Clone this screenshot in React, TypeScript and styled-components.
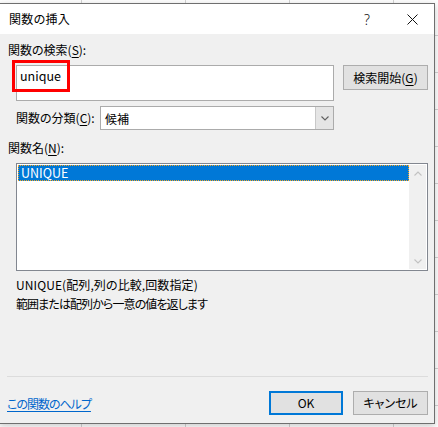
import React from "react";
import styled, { createGlobalStyle } from "styled-components";

const Global = createGlobalStyle`
  html, body { margin: 0; padding: 0; }
  body {
    width: 438px;
    height: 427px;
    overflow: hidden;
    background-color: #ffffff;
    background-image:
      linear-gradient(to right, transparent 81px, #d4d4d4 81px, #d4d4d4 82px, transparent 82px),
      linear-gradient(to bottom, transparent 35px, #d4d4d4 35px, #d4d4d4 36px, transparent 36px);
    background-size: 104px 100%, 100% 37px;
    background-position: 0 0, 0 0;
    font-family: "Noto Sans CJK JP", "Noto Sans", sans-serif;
    font-size: 12px;
    color: #000;
  }
`;

const Page = styled.div`
  padding-top: 3px;
`;

const Dialog = styled.div`
  margin-left: -1px;
  width: 434px;
  height: 419px;
  border: 1px solid #6f6f6f;
  background: #f0f0f0;
  box-shadow: 0 2px 7px rgba(0, 0, 0, 0.22);
  display: flex;
  flex-direction: column;
  font-feature-settings: "palt";
`;

const TitleBar = styled.div`
  height: 30px;
  background: #ffffff;
  display: flex;
  align-items: center;
`;

const Title = styled.div`
  flex: 1;
  padding-left: 9px;
  font-size: 12px;
  line-height: 16px;
  letter-spacing: 0.3px;
`;

const CaptionButton = styled.div<{ $w: number }>`
  width: ${(p) => p.$w}px;
  height: 30px;
  display: flex;
  align-items: center;
  justify-content: center;
  font-family: "Noto Sans", sans-serif;
  font-size: 14px;
  font-weight: 300;
  color: #111;
`;

const Body = styled.div`
  flex: 1;
  display: flex;
  flex-direction: column;
  padding-top: 8px;
`;

const Label = styled.div<{ $indent: number; $top: number }>`
  margin-left: ${(p) => p.$indent}px;
  margin-top: ${(p) => p.$top}px;
  line-height: 16px;
  height: 16px;
  white-space: nowrap;
`;

const Key = styled.span`
  text-decoration: underline;
  text-underline-offset: 2px;
`;

const SearchRow = styled.div`
  margin-top: 7px;
  margin-left: 16px;
  display: flex;
  align-items: flex-start;
  gap: 9px;
`;

const TextBox = styled.div`
  position: relative;
  box-sizing: border-box;
  width: 318px;
  height: 36px;
  background: #fff;
  border: 1px solid #ababab;
  padding: 2px 0 0 3px;
  line-height: 16px;
  font-family: "Noto Sans CJK JP", sans-serif;
  font-size: 12.5px;
`;

const Highlight = styled.div`
  position: absolute;
  left: -5px;
  top: -6px;
  width: 58px;
  height: 32px;
  box-sizing: border-box;
  border: 3px solid #ff0000;
`;

const Button = styled.div<{ $w: number; $h: number; $primary?: boolean }>`
  box-sizing: border-box;
  width: ${(p) => p.$w}px;
  height: ${(p) => p.$h}px;
  background: #e1e1e1;
  border: ${(p) => (p.$primary ? "2px solid #0078d7" : "1px solid #adadad")};
  display: flex;
  align-items: center;
  justify-content: center;
  line-height: 16px;
  white-space: nowrap;
`;

const CategoryRow = styled.div`
  margin-top: 5px;
  margin-left: 16px;
  display: flex;
  align-items: center;
  height: 24px;
`;

const CategoryLabel = styled.div`
  width: 84px;
  line-height: 16px;
  white-space: nowrap;
`;

const Select = styled.div`
  box-sizing: border-box;
  width: 234px;
  height: 24px;
  background: #fff;
  border: 1px solid #ababab;
  display: flex;
  align-items: stretch;
`;

const SelectValue = styled.div`
  flex: 1;
  padding-left: 4px;
  display: flex;
  align-items: center;
`;

const SelectArrow = styled.div`
  width: 17px;
  background: #e5e5e5;
  border-left: 1px solid #c8c8c8;
  display: flex;
  align-items: center;
  justify-content: center;
`;

const ListBox = styled.div`
  margin-top: 7px;
  margin-left: 16px;
  box-sizing: border-box;
  width: 412px;
  height: 108px;
  background: #fff;
  border: 1px solid #828790;
  padding: 1px;
  display: flex;
`;

const ListItems = styled.div`
  flex: 1;
`;

const ListItem = styled.div<{ $selected?: boolean }>`
  box-sizing: border-box;
  height: 16px;
  line-height: 14px;
  padding-left: 2px;
  background: ${(p) => (p.$selected ? "#0078d7" : "transparent")};
  color: ${(p) => (p.$selected ? "#fff" : "#000")};
  border: 1px dotted ${(p) => (p.$selected ? "#f5a623" : "transparent")};
  font-size: 12.5px;
`;

const ScrollBar = styled.div`
  width: 17px;
  background: #f0f0f0;
  display: flex;
  flex-direction: column;
  justify-content: space-between;
  align-items: center;
  padding: 6px 0 5px;
`;

const Description = styled.div`
  margin-top: 4px;
  margin-left: 16px;
`;

const DescLine = styled.div<{ $tight?: boolean }>`
  line-height: 19px;
  white-space: nowrap;
  letter-spacing: ${(p) => (p.$tight ? "-0.9px" : "0.1px")};
`;

const Separator = styled.div`
  margin: 63px 6px 0 7px;
  height: 1px;
  background: #dcdcdc;
`;

const Footer = styled.div`
  margin-top: 14px;
  padding: 0 6px 0 7px;
  display: flex;
  align-items: center;
  gap: 10px;
`;

const HelpLinkBox = styled.div`
  flex: 1;
`;

const HelpLink = styled.a`
  color: #0066cc;
  text-decoration: underline;
  text-underline-offset: 2px;
  line-height: 16px;
  letter-spacing: -1px;
  cursor: pointer;
`;

const Chevron = ({ up, color, w = 8 }: { up?: boolean; color: string; w?: number }) => (
  <svg width={w} height={5} viewBox="0 0 8 5">
    <path
      d={up ? "M0.5 4.5 L4 1 L7.5 4.5" : "M0.5 0.5 L4 4 L7.5 0.5"}
      fill="none"
      stroke={color}
      strokeWidth={1.1}
    />
  </svg>
);

export default function App() {
  return (
    <>
      <Global />
      <Page>
        <Dialog>
          <TitleBar>
            <Title>関数の挿入</Title>
            <CaptionButton $w={46}>?</CaptionButton>
            <CaptionButton $w={44}>
              <svg width="11" height="11" viewBox="0 0 11 11">
                <path d="M0.5 0.5 L10.5 10.5 M10.5 0.5 L0.5 10.5" stroke="#111" strokeWidth="1" />
              </svg>
            </CaptionButton>
          </TitleBar>
          <Body>
            <Label $indent={8} $top={0}>
              関数の検索(<Key>S</Key>):
            </Label>
            <SearchRow>
              <TextBox>
                unique
                <Highlight />
              </TextBox>
              <Button $w={85} $h={25}>
                検索開始(<Key>G</Key>)
              </Button>
            </SearchRow>
            <CategoryRow>
              <CategoryLabel>
                関数の分類(<Key>C</Key>):
              </CategoryLabel>
              <Select>
                <SelectValue>候補</SelectValue>
                <SelectArrow>
                  <Chevron color="#606060" />
                </SelectArrow>
              </Select>
            </CategoryRow>
            <Label $indent={8} $top={10}>
              関数名(<Key>N</Key>):
            </Label>
            <ListBox>
              <ListItems>
                <ListItem $selected>UNIQUE</ListItem>
              </ListItems>
              <ScrollBar>
                <Chevron up color="#c2c2c2" />
                <Chevron color="#c2c2c2" />
              </ScrollBar>
            </ListBox>
            <Description>
              <DescLine>UNIQUE(配列,列の比較,回数指定)</DescLine>
              <DescLine $tight>範囲または配列から一意の値を返します</DescLine>
            </Description>
            <Separator />
            <Footer>
              <HelpLinkBox>
                <HelpLink>この関数のヘルプ</HelpLink>
              </HelpLinkBox>
              <Button $w={74} $h={24} $primary>
                OK
              </Button>
              <Button $w={75} $h={24}>
                キャンセル
              </Button>
            </Footer>
          </Body>
        </Dialog>
      </Page>
    </>
  );
}
